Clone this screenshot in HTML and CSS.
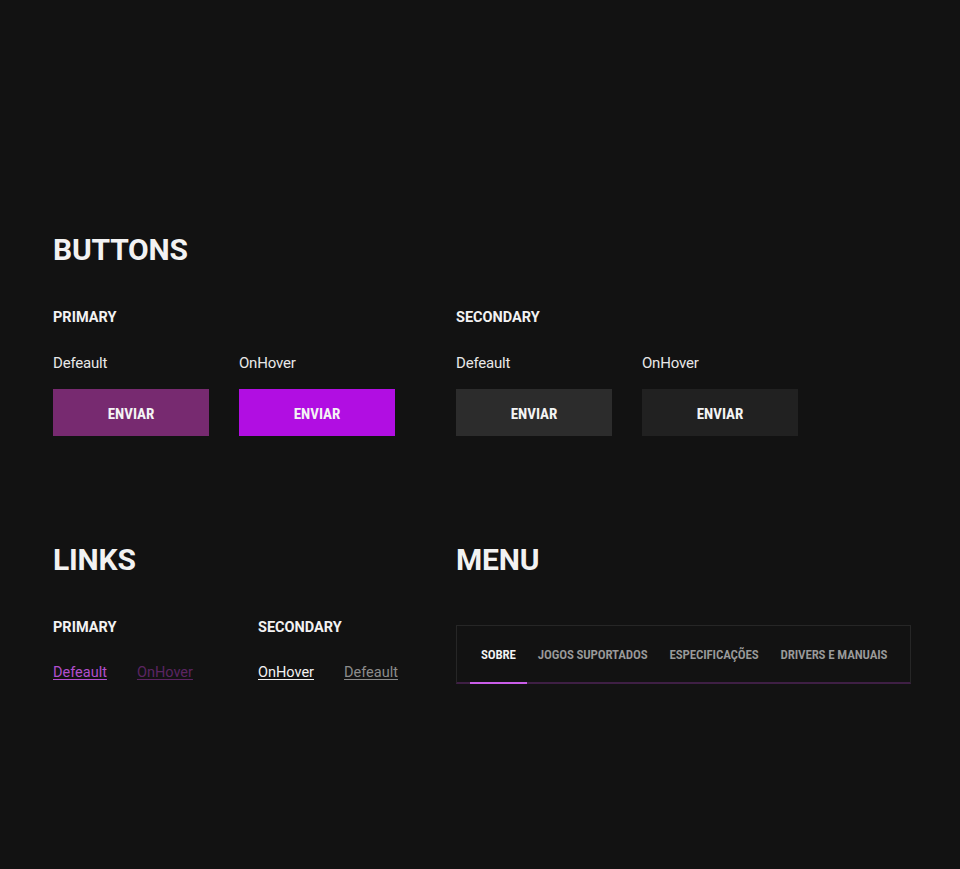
FILE: index.html
```html
<!DOCTYPE html>
<html lang="pt-BR">
<head>
    <meta charset="UTF-8">
    <meta name="viewport" content="width=device-width, initial-scale=1.0">
    <title>Style Guide</title>
    <link rel="stylesheet" href="styles.css">
</head>
<body>
    <div class="guide">
        <section class="block buttons">
            <h2>BUTTONS</h2>
            <div class="pair">
                <div class="group">
                    <h4>PRIMARY</h4>
                    <div class="states">
                        <div class="state">
                            <span class="state-label">Defeault</span>
                            <button class="btn btn-primary">ENVIAR</button>
                        </div>
                        <div class="state">
                            <span class="state-label">OnHover</span>
                            <button class="btn btn-primary is-hover">ENVIAR</button>
                        </div>
                    </div>
                </div>
                <div class="group">
                    <h4>SECONDARY</h4>
                    <div class="states">
                        <div class="state">
                            <span class="state-label">Defeault</span>
                            <button class="btn btn-secondary">ENVIAR</button>
                        </div>
                        <div class="state">
                            <span class="state-label">OnHover</span>
                            <button class="btn btn-secondary is-hover">ENVIAR</button>
                        </div>
                    </div>
                </div>
            </div>
        </section>

        <div class="pair lower">
            <section class="block">
                <h2>LINKS</h2>
                <div class="link-groups">
                    <div class="group">
                        <h4>PRIMARY</h4>
                        <div class="links">
                            <a href="#" class="link link-primary">Defeault</a>
                            <a href="#" class="link link-primary is-hover">OnHover</a>
                        </div>
                    </div>
                    <div class="group">
                        <h4>SECONDARY</h4>
                        <div class="links">
                            <a href="#" class="link link-secondary is-hover">OnHover</a>
                            <a href="#" class="link link-secondary">Defeault</a>
                        </div>
                    </div>
                </div>
            </section>

            <section class="block">
                <h2>MENU</h2>
                <nav class="menu">
                    <a href="#" class="menu-item active">SOBRE</a>
                    <a href="#" class="menu-item">JOGOS SUPORTADOS</a>
                    <a href="#" class="menu-item">ESPECIFICAÇÕES</a>
                    <a href="#" class="menu-item">DRIVERS E MANUAIS</a>
                </nav>
            </section>
        </div>
    </div>
</body>
</html>
```

FILE: styles.css
```css
body {
    margin: 0;
    background-color: #121212;
    color: #f2f2f2;
    font-family: Roboto, "Liberation Sans", sans-serif;
}
.guide {
    padding: 230px 49px 0 53px;
}
.pair {
    display: grid;
    grid-template-columns: 403px minmax(0, 1fr);
}
h2 {
    margin: 0 0 38px;
    font-size: 30px;
    line-height: 40px;
    font-weight: 700;
    letter-spacing: -0.2px;
}
h4 {
    margin: 0;
    font-size: 14.5px;
    line-height: 20px;
    font-weight: 700;
}
.states {
    display: flex;
    gap: 30px;
    margin-top: 25px;
}
.state {
    display: flex;
    flex-direction: column;
    gap: 16px;
}
.state-label {
    font-size: 15px;
    line-height: 20px;
    letter-spacing: -0.2px;
    color: #e8e8e8;
}
.btn {
    width: 156px;
    height: 47px;
    border: none;
    padding: 2px 0 0;
    color: #f4f4f4;
    font-family: Roboto, sans-serif;
    font-stretch: 78%;
    font-size: 15px;
    font-weight: 700;
    cursor: pointer;
}
.btn-primary {
    background-color: #772a70;
}
.btn-primary.is-hover {
    background-color: #b10ee2;
}
.btn-secondary {
    background-color: #2c2c2c;
}
.btn-secondary.is-hover {
    background-color: #212121;
}

.lower {
    margin-top: 104px;
}
.link-groups {
    display: grid;
    grid-template-columns: 205px 1fr;
}
.links {
    display: flex;
    gap: 30px;
    margin-top: 25px;
}
.link {
    font-size: 14.5px;
    line-height: 20px;
    text-underline-offset: 2px;
}
.link-primary {
    color: #b24fcf;
}
.link-primary.is-hover {
    color: #5b2562;
}
.link-secondary {
    color: #8c8c8c;
}
.link-secondary.is-hover {
    color: #f2f2f2;
}

.menu {
    display: flex;
    margin-top: 45px;
    height: 56px;
    padding: 0 13px;
    border: 1px solid #262626;
    border-bottom: 2px solid #3e1f44;
}
.menu-item {
    display: flex;
    align-items: center;
    padding: 0 11px;
    margin-bottom: -2px;
    border-bottom: 2px solid transparent;
    color: #9a9a9a;
    text-decoration: none;
    white-space: nowrap;
    font-stretch: 75%;
    font-size: 13px;
    font-weight: 600;
    letter-spacing: -0.15px;
}
.menu-item.active {
    color: #f4f4f4;
    border-bottom-color: #c95de8;
}
```
